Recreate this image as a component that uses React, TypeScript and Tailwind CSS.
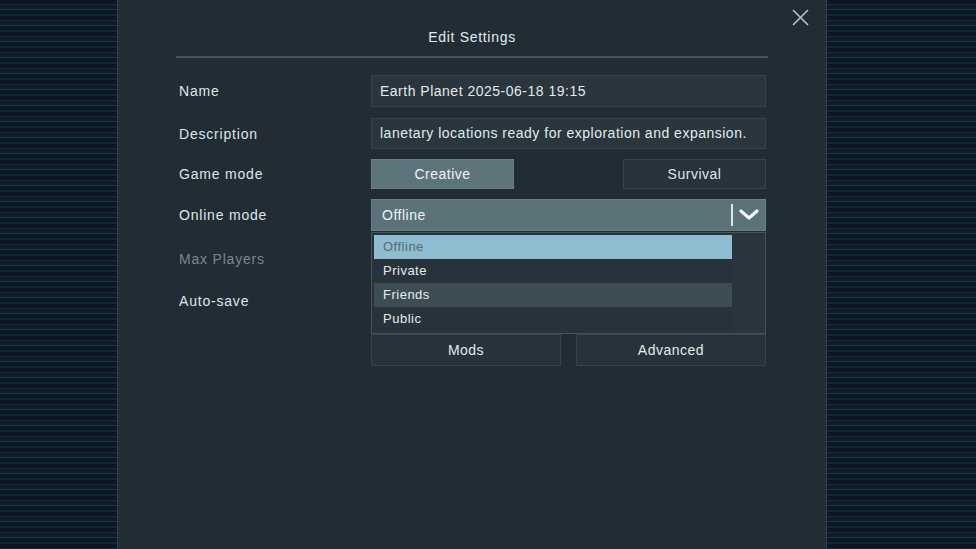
import React from 'react';

const Stripes: React.FC<{ className?: string }> = ({ className }) => (
  <div
    className={`h-full bg-[repeating-linear-gradient(180deg,#0d1620_0px,#0d1620_4px,#132a40_4px,#132a40_5px,#0f1b27_5px,#0f1b27_9px,#183551_9px,#183551_10px,#0d1721_10px,#0d1721_14px,#11253a_14px,#11253a_16px)] ${className ?? ''}`}
  />
);

const Label: React.FC<{ children: React.ReactNode; dim?: boolean }> = ({ children, dim }) => (
  <div className={`w-[195px] shrink-0 pl-[3px] pt-[1px] text-[14px] tracking-[0.8px] ${dim ? 'text-[#7b868b]' : 'text-[#dde6e9]'}`}>{children}</div>
);

const Row: React.FC<{ className?: string; children: React.ReactNode }> = ({ className, children }) => (
  <div className={`flex items-center ${className ?? ''}`}>{children}</div>
);

const options = ['Offline', 'Private', 'Friends', 'Public'];

const App: React.FC = () => {
  return (
    <div
      className="flex h-[549px] w-[976px] overflow-hidden bg-[#0e1822] tracking-[0.5px]"
      style={{ fontFamily: '"Liberation Sans", Arial, sans-serif' }}
    >
      <Stripes className="w-[117px]" />

      {/* Settings panel */}
      <div className="relative h-full w-[710px] border-x border-[#36424b] bg-[#222c34]">
        {/* Close */}
        <button className="absolute right-[17px] top-[9px] h-[17px] w-[17px]">
          <svg viewBox="0 0 17 17" className="h-[17px] w-[17px]">
            <path d="M1 1L16 16M16 1L1 16" stroke="#b8c1c5" strokeWidth="1.6" fill="none" />
          </svg>
        </button>

        <div className="px-[58px] pt-[28px]">
          <h1 className="text-center text-[14px] leading-[18px] tracking-[0.7px] text-[#e3eaec]">Edit Settings</h1>
          <div className="mt-[10px] h-[2px] bg-[#46535c]" />

          {/* Name */}
          <Row className="mt-[17px]">
            <Label>Name</Label>
            <div className="flex h-[32px] w-[395px] items-center border border-[#37434b] bg-[#2a353d] px-[8px] text-[14px] text-[#e2eaec]">
              Earth Planet 2025-06-18 19:15
            </div>
          </Row>

          {/* Description */}
          <Row className="mt-[11px]">
            <Label>Description</Label>
            <div className="flex h-[31px] w-[395px] items-center overflow-hidden whitespace-nowrap border border-[#37434b] bg-[#2a353d] px-[8px] text-[14px] text-[#e2eaec]">
              lanetary locations ready for exploration and expansion.
            </div>
          </Row>

          {/* Game mode */}
          <Row className="mt-[10px]">
            <Label>Game mode</Label>
            <div className="flex h-[30px] w-[395px] justify-between">
              <button className="w-[143px] border border-[#6a8088] bg-[#5e747b] text-[14px] text-[#eef3f4]">Creative</button>
              <button className="w-[143px] border border-[#37434b] bg-[#28323a] text-[14px] text-[#dfe7ea]">Survival</button>
            </div>
          </Row>

          {/* Online mode */}
          <Row className="mt-[10px]">
            <Label>Online mode</Label>
            <div className="relative w-[395px]">
              <div className="flex h-[32px] items-center justify-between border border-[#6a7f86] bg-[#5c7279] pl-[10px] pr-[6px] text-[14px] text-[#eef3f4]">
                <span>Offline</span>
                <div className="flex items-center gap-[6px]">
                  <div className="h-[22px] w-[2px] bg-[#dce5e8]" />
                  <svg viewBox="0 0 20 12" className="h-[12px] w-[20px]">
                    <path d="M2 2L10 9L18 2" stroke="#f2f6f7" strokeWidth="3.2" fill="none" strokeLinecap="round" strokeLinejoin="round" />
                  </svg>
                </div>
              </div>

              {/* Dropdown list */}
              <div className="absolute left-0 top-[33px] z-10 flex h-[102px] w-[395px] border border-[#46535b] bg-[#27323a]">
                <div className="flex w-[360px] flex-col pl-[2px] pt-[2px]">
                  {options.map((o, i) => (
                    <div
                      key={o}
                      className={`flex h-[24px] items-center px-[9px] text-[13px] ${
                        i === 0
                          ? 'bg-[#8ebdd0] text-[#5a6a71]'
                          : i === 2
                          ? 'bg-[#3e4c53] text-[#e6edef]'
                          : 'text-[#e6edef]'
                      }`}
                    >
                      {o}
                    </div>
                  ))}
                </div>
                <div className="flex-1 bg-[#29343c]" />
              </div>
            </div>
          </Row>

          {/* Max players */}
          <Row className="mt-[12px] h-[32px]">
            <Label dim>Max Players</Label>
          </Row>

          {/* Auto-save */}
          <Row className="mt-[10px] h-[32px]">
            <Label>Auto-save</Label>
          </Row>

          <Row className="mt-[17px]">
            <div className="w-[195px] shrink-0" />
            <div className="flex w-[395px] justify-between">
              <button className="h-[32px] w-[190px] border border-[#37434b] bg-[#28323a] text-[14px] text-[#e2eaec]">Mods</button>
              <button className="h-[32px] w-[190px] border border-[#37434b] bg-[#28323a] text-[14px] text-[#e2eaec]">Advanced</button>
            </div>
          </Row>
        </div>
      </div>

      <Stripes className="flex-1" />
    </div>
  );
};

export default App;
